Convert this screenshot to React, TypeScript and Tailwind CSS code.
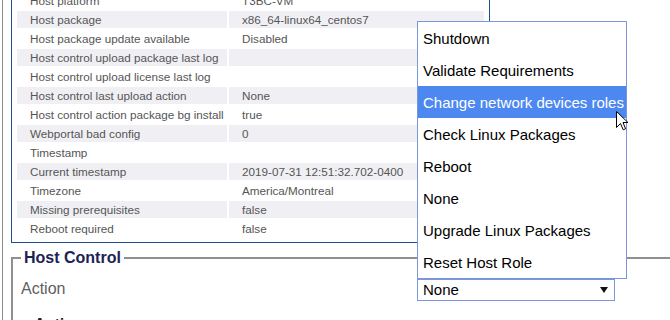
import React from "react";

const rows: [string, string][] = [
  ["Host platform", "T3BC-VM"],
  ["Host package", "x86_64-linux64_centos7"],
  ["Host package update available", "Disabled"],
  ["Host control upload package last log", ""],
  ["Host control upload license last log", ""],
  ["Host control last upload action", "None"],
  ["Host control action package bg install", "true"],
  ["Webportal bad config", "0"],
  ["Timestamp", ""],
  ["Current timestamp", "2019-07-31 12:51:32.702-0400"],
  ["Timezone", "America/Montreal"],
  ["Missing prerequisites", "false"],
  ["Reboot required", "false"],
];

const options = [
  "Shutdown",
  "Validate Requirements",
  "Change network devices roles",
  "Check Linux Packages",
  "Reboot",
  "None",
  "Upgrade Linux Packages",
  "Reset Host Role",
];

export default function App() {
  return (
    <div className="relative w-[670px] h-[320px] overflow-hidden bg-white font-['Liberation_Sans',Arial,sans-serif]">
      <div className="ml-[2px] w-[720px] min-h-[400px] border-l border-[#8c8c8c] pl-[8px]">
        {/* info panel */}
        <div className="mt-[-8px] w-[479px] border-x border-b border-[#1f4f8f] px-[5px] pb-[5px]">
          <div className="flex flex-col gap-[2px]">
            {rows.map(([label, value], i) => {
              const bg = i % 2 === 1 ? "bg-[#f0f0f4]" : "bg-white";
              return (
                <div key={label} className="flex gap-[2px] h-[17px] text-[11.7px] leading-[17px] text-[#555555]">
                  <div className={`w-[210px] pl-[13px] whitespace-nowrap ${bg}`}>{label}</div>
                  <div className={`flex-1 pl-[13px] whitespace-nowrap ${bg}`}>{value}</div>
                </div>
              );
            })}
          </div>
        </div>

        {/* Host Control */}
        <fieldset className="mt-[6px] w-[700px] min-h-[100px] border-2 border-[#8f8f8f] pl-[8px]">
          <legend className="px-[3px] text-[16px] leading-[18px] font-bold text-[#1c2454]">Host Control</legend>
          <div className="mt-[12px] flex items-center h-[22px]">
            <div className="w-[396px] text-[16px] leading-[18px] text-[#606060] mt-[-3px]">Action</div>
            <div className="w-[198px] h-[22px] border border-[#7b96dc] flex items-center justify-between pl-[5px] pr-[6px] text-[15px] text-black">
              <span>None</span>
              <svg width="8" height="6" viewBox="0 0 8 6">
                <path d="M0 0 H8 L4 6 Z" fill="#111" />
              </svg>
            </div>
          </div>
          <div className="mt-[15px] pl-[13px] text-[16px] leading-[18px] font-bold text-[#222]">Actions</div>
        </fieldset>
      </div>

      {/* open dropdown list */}
      <div className="absolute left-[417px] top-[21px] w-[210px] border border-[#7b96dc] bg-white">
        {options.map((o) => (
          <div
            key={o}
            className={`h-[32px] flex items-center pl-[5px] pt-[2px] text-[15px] whitespace-nowrap ${
              o === "Change network devices roles" ? "bg-[#4c88f0] text-white" : "text-black"
            }`}
          >
            {o}
          </div>
        ))}
      </div>

      {/* mouse cursor */}
      <svg className="absolute left-[616px] top-[111px]" width="13" height="20" viewBox="0 0 13 20">
        <path d="M0.5 0.5 L0.5 16.5 L4.5 12.5 L7.2 18.8 L9.6 17.8 L7 11.5 L12 11.5 Z" fill="#fff" stroke="#000" strokeWidth="1" strokeLinejoin="miter" />
      </svg>
    </div>
  );
}
